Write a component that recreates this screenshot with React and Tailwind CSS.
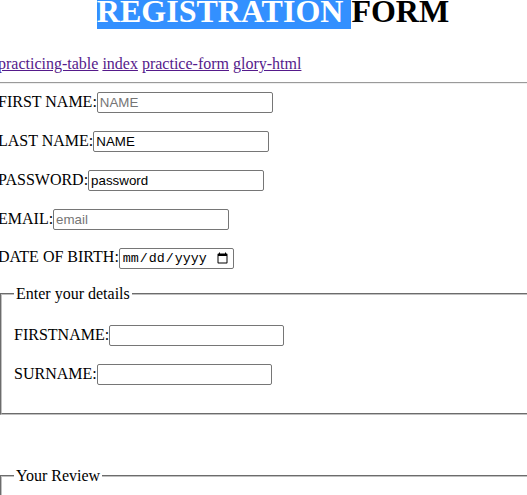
import React from "react";

const inputCls =
  "h-[21px] border border-[#767676] rounded-[2px] px-[2px] text-[13.33px] text-black placeholder:text-[#757575] bg-white outline-none [font-family:'Liberation_Sans',Arial,sans-serif]";

function Row({ label, children }) {
  return (
    <div className="flex items-baseline h-[21px]">
      <span className="leading-[18px] whitespace-nowrap">{label}</span>
      {children}
    </div>
  );
}

export default function App() {
  return (
    <div className="w-[527px] h-[495px] overflow-hidden bg-white text-black text-[16px] [font-family:'Liberation_Serif','Times_New_Roman',serif]">
      <div className="-ml-[2px] -mt-[6px] w-[548px]">
        <h1 className="pl-[2px] text-[32px] font-bold text-center leading-[35px] h-[35px] whitespace-nowrap">
          <span className="bg-[#3390ff] text-white">REGISTRATION </span>
          FORM
        </h1>
        <div className="mt-[26px] leading-[18px] h-[18px] whitespace-nowrap">
          <a href="#" className="underline text-[#551a8b]">practicing-table</a>{" "}
          <a href="#" className="underline text-[#551a8b]">index</a>{" "}
          <a href="#" className="underline text-[#551a8b]">practice-form</a>{" "}
          <a href="#" className="underline text-[#551a8b]">glory-html</a>
        </div>
        <hr className="mt-[9px] h-0 border-t border-t-[#9a9a9a] border-b border-b-[#eeeeee]" />
        <div className="mt-[8px] flex flex-col gap-[18px]">
          <Row label="FIRST NAME:">
            <input className={`${inputCls} w-[176px]`} placeholder="NAME" />
          </Row>
          <Row label="LAST NAME:">
            <input className={`${inputCls} w-[176px]`} defaultValue="NAME" />
          </Row>
          <Row label="PASSWORD:">
            <input className={`${inputCls} w-[176px]`} defaultValue="password" />
          </Row>
          <Row label="EMAIL:">
            <input className={`${inputCls} w-[176px]`} placeholder="email" />
          </Row>
          <Row label="DATE OF BIRTH:">
            <input
              type="date"
              className="h-[21px] w-[115px] border border-[#767676] rounded-[2px] px-[2px] text-[13.33px] text-black bg-white outline-none [font-family:'Liberation_Mono',monospace]"
            />
          </Row>
        </div>
        <fieldset className="mt-[16px] mx-[2px] px-[12px] pt-[6px] pb-[28px] border-2 [border-style:groove] border-[#c0c0c0]">
          <legend className="px-[2px] leading-[18px]">Enter your details</legend>
          <div className="mt-[16px] flex flex-col gap-[18px]">
            <Row label="FIRSTNAME:">
              <input className={`${inputCls} w-[175px]`} />
            </Row>
            <Row label="SURNAME:">
              <input className={`${inputCls} w-[175px]`} />
            </Row>
          </div>
        </fieldset>
        <fieldset className="mt-[52px] mx-[2px] px-[12px] pt-[6px] pb-[10px] border-2 [border-style:groove] border-[#c0c0c0] h-[120px]">
          <legend className="px-[2px] leading-[18px]">Your Review</legend>
          <div className="mt-[16px]">
            <textarea className="border border-[#767676] rounded-[2px] w-[200px] h-[40px]" />
          </div>
        </fieldset>
      </div>
    </div>
  );
}
